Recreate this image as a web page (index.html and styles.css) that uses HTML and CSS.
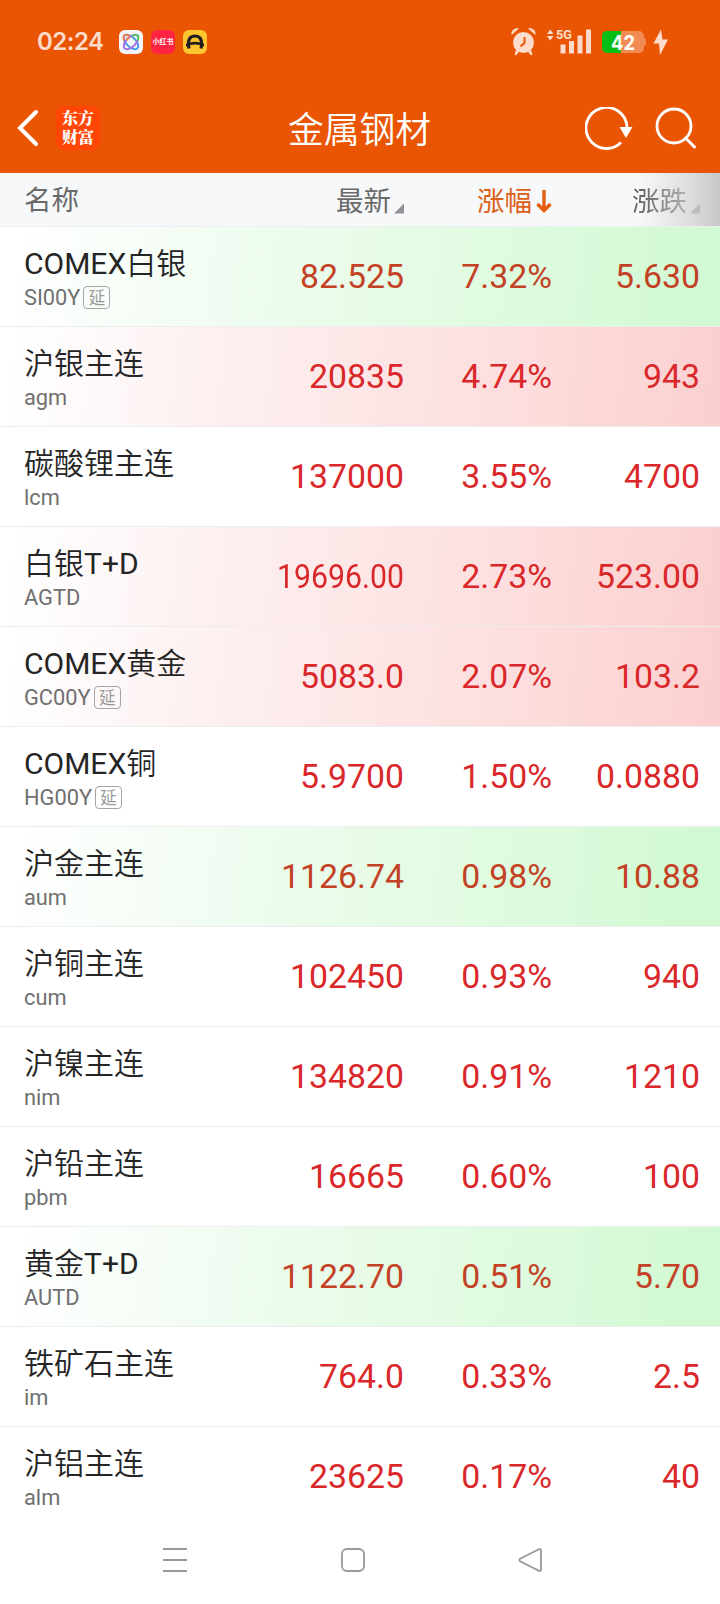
FILE: index.html
```html
<!DOCTYPE html>
<html lang="zh-CN">
<head>
<meta charset="utf-8">
<title>金属钢材</title>
<link rel="stylesheet" href="styles.css">
</head>
<body>
<div class="screen">
  <header class="top">
    <div class="status">
      <span class="clock">02:24</span>
      <svg class="app" viewBox="0 0 24 24"><rect width="24" height="24" rx="6" fill="#f4f6fa"/><g fill="none" stroke-width="2"><ellipse cx="12" cy="12" rx="9" ry="4.8" transform="rotate(45 12 12)" stroke="#3f9be8"/><ellipse cx="12" cy="12" rx="9" ry="4.8" transform="rotate(-45 12 12)" stroke="#a56be0"/><path d="M5.200 10.500C3.300 5 5.500 3.500 11 6.200" stroke="#f5794d"/><path d="M13 6.200C18.500 3.500 20.700 5 18.800 10.500" stroke="#55cf5b"/></g><path d="M7 7.500h4.500L8 11z" fill="#f58a4d"/></svg>
      <span class="app app-red">小红书</span>
      <svg class="app" viewBox="0 0 24 24"><rect width="24" height="24" rx="6" fill="#fdc52e"/><path d="M6 18.500C4.200 9.500 7 6 12 6S19.800 9.500 18 18.500" fill="none" stroke="#231f20" stroke-width="3.200"/><path d="M3 14Q12 9.500 21 14v2.500Q12 12.500 3 16.500z" fill="#231f20"/></svg>
      <span class="spacer"></span>
      <svg class="system" width="160" height="30" viewBox="0 0 160 30">
        <g fill="#fddccb">
          <circle cx="13.500" cy="16.500" r="10.500"/>
          <path d="M1.500 9C1 4 5 1.500 9 2.500zM18 2.500C22 1.500 26 4 25.500 9z"/>
          <path d="M6 24l3 1.500-2.500 3.500H4.500zM21 24l-3 1.500 2.500 3.500h2z"/>
          <path d="M37 8l3.200-4.500L43.500 8zM37 10h6.500l-3.300 4.500z"/>
          <rect x="50.500" y="18.500" width="5" height="9"/><rect x="59" y="15" width="5" height="12.500"/><rect x="67.500" y="9.500" width="5" height="18"/><rect x="76" y="3.500" width="5" height="24"/>
          <path d="M151 3.500L143.500 17.500H149L150 29 158 13.500H152.500z"/>
        </g>
        <path d="M14.500 11v6l-4 3.500" fill="none" stroke="#ea5504" stroke-width="2"/>
        <text x="46" y="13" class="net" textLength="16" lengthAdjust="spacingAndGlyphs">5G</text>
        <rect x="92" y="5" width="42" height="22" rx="5" fill="#f28b53"/><path d="M111 5H97a5 5 0 0 0-5 5v12a5 5 0 0 0 5 5h14z" fill="#05be14"/><path d="M134 12q2 0 2 2v4q0 2-2 2z" fill="#f28b53"/>
        <text x="101" y="23.500" class="battery" textLength="24" lengthAdjust="spacingAndGlyphs">42</text>
      </svg>
    </div>
    <div class="titlebar">
      <svg class="back" width="22" height="38" viewBox="0 0 22 38"><path d="M19 3L3 19l16 16" fill="none" stroke="#fff" stroke-width="4" stroke-linecap="round"/></svg>
      <div class="brand"><span>东方</span><span>财富</span></div>
      <h1>金属钢材</h1>
      <svg class="refresh" width="48" height="44" viewBox="0 0 48 44"><path d="M42 20A20.500 20.500 0 1 0 36 35.500" fill="none" stroke="#fff" stroke-width="2.800"/><path d="M34.500 20h13L41 31z" fill="#fff"/></svg>
      <svg class="search" width="42" height="44" viewBox="0 0 42 44"><circle cx="19" cy="20" r="17" fill="none" stroke="#fff" stroke-width="2.800"/><path d="M30.500 32l9 9" stroke="#fff" stroke-width="3" stroke-linecap="round"/></svg>
    </div>
  </header>
  <div class="columns">
    <span class="col-name">名称</span>
    <span class="col">最新<i class="corner"></i></span>
    <span class="col active">涨幅<svg width="16" height="26" viewBox="0 0 16 26"><path d="M8 1v20M1.500 15L8 21.500 14.500 15" fill="none" stroke="#e4600f" stroke-width="3.400"/></svg></span>
    <span class="col">涨跌<i class="corner"></i></span>
  </div>
  <main class="list">
    <div class="row up-green"><div class="name"><b><i>COMEX</i>白银</b><small>SI00Y<em>延</em></small></div><span>82.525</span><span>7.32%</span><span>5.630</span></div>
    <div class="row up-red"><div class="name"><b>沪银主连</b><small>agm</small></div><span>20835</span><span>4.74%</span><span>943</span></div>
    <div class="row"><div class="name"><b>碳酸锂主连</b><small>lcm</small></div><span>137000</span><span>3.55%</span><span>4700</span></div>
    <div class="row up-red"><div class="name"><b>白银<i>T+D</i></b><small>AGTD</small></div><span class="long">19696.00</span><span>2.73%</span><span>523.00</span></div>
    <div class="row up-red"><div class="name"><b><i>COMEX</i>黄金</b><small>GC00Y<em>延</em></small></div><span>5083.0</span><span>2.07%</span><span>103.2</span></div>
    <div class="row"><div class="name"><b><i>COMEX</i>铜</b><small>HG00Y<em>延</em></small></div><span>5.9700</span><span>1.50%</span><span>0.0880</span></div>
    <div class="row up-green"><div class="name"><b>沪金主连</b><small>aum</small></div><span>1126.74</span><span>0.98%</span><span>10.88</span></div>
    <div class="row"><div class="name"><b>沪铜主连</b><small>cum</small></div><span>102450</span><span>0.93%</span><span>940</span></div>
    <div class="row"><div class="name"><b>沪镍主连</b><small>nim</small></div><span>134820</span><span>0.91%</span><span>1210</span></div>
    <div class="row"><div class="name"><b>沪铅主连</b><small>pbm</small></div><span>16665</span><span>0.60%</span><span>100</span></div>
    <div class="row up-green"><div class="name"><b>黄金<i>T+D</i></b><small>AUTD</small></div><span>1122.70</span><span>0.51%</span><span>5.70</span></div>
    <div class="row"><div class="name"><b>铁矿石主连</b><small>im</small></div><span>764.0</span><span>0.33%</span><span>2.5</span></div>
    <div class="row"><div class="name"><b>沪铝主连</b><small>alm</small></div><span>23625</span><span>0.17%</span><span>40</span></div>
  </main>
  <nav class="nav">
    <svg viewBox="0 0 26 26"><path d="M1 2h24M1 13h24M1 24h24"/></svg>
    <svg viewBox="0 0 26 26"><rect x="2" y="2" width="22" height="22" rx="5"/></svg>
    <svg viewBox="0 0 26 26"><path d="M22 2.200L3.500 11.500Q1 13 3.500 14.500L22 23.800Q24 24.500 24 22.500V3.500Q24 1.500 22 2.200z"/></svg>
  </nav>
</div>
</body>
</html>
```
FILE: styles.css
```css
* { box-sizing: border-box; }
body { margin: 0; background: #fff; font-family: Roboto, "Noto Sans CJK SC", sans-serif; }
.screen { width: 720px; height: 1604px; display: flex; flex-direction: column; overflow: hidden; }
.top { height: 173px; background: #ea5504; flex: none; }
.status { height: 84px; padding: 0 50px 0 37px; display: flex; align-items: center; }
.clock { width: 82px; font: 600 24px/30px Inter, sans-serif; letter-spacing: -.5px; color: #fddccb; white-space: nowrap; margin-top: -1px; }
.app { width: 24px; height: 24px; margin-right: 8px; flex: none; }
.app-red { border-radius: 6px; background: #ff2442; color: #fff; font: 700 7px/23px "Noto Sans CJK SC", sans-serif; text-align: center; white-space: nowrap; }
.spacer { flex: 1; }
.system { margin-top: -3px; }
.net { font: 700 13px Roboto, sans-serif; fill: #fddccb; }
.battery { font: 700 20px Inter, sans-serif; fill: #fff; }
.titlebar { height: 87px; padding: 0 23px 0 17px; display: flex; align-items: center; }
.brand { width: 44px; height: 44px; margin-left: 17px; padding-bottom: 2px; border-radius: 8px; background: #ff4604; color: #fff; display: flex; flex-direction: column; align-items: center; justify-content: center; font: 900 16px/19px "Noto Serif CJK SC", "Noto Sans CJK SC", sans-serif; }
.brand span { height: 19px; }
.titlebar h1 { margin: 0; flex: 1; padding: 6px 0 0 35px; text-align: center; font-weight: 350; font-size: 35.800px; line-height: 48px; color: #fff; }
.refresh { margin: 2px 0 0 1px; }
.search { margin-left: 22px; }
.columns { height: 54px; flex: none; padding: 0 20px 0 24px; display: grid; grid-template-columns: 220px 160px 148px 148px; align-items: center; color: #6a6a6a; font-size: 27.500px; line-height: 40px; border-bottom: 1px solid #edf0f1; background: linear-gradient(90deg, rgba(198,198,198,0) 640px, rgba(198,198,198,.55) 690px, #c8c8c8 720px), #f7f8fa; }
.col-name { padding-top: 2px; }
.col { display: flex; justify-content: flex-end; align-items: center; padding-top: 5px; }
.col:last-child { color: transparent; background: linear-gradient(90deg, #666 90px, #aaa 130px); -webkit-background-clip: text; background-clip: text; }
.corner { width: 10px; height: 10px; margin: 13px 0 0 3px; background: #919196; clip-path: polygon(100% 0, 100% 100%, 0 100%); }
.col:last-child .corner { background: #bcbcbc; }
.active { color: #dc5f17; }
.active svg { margin: 0 0 0 4px; }
.list { height: 1292px; flex: none; overflow: hidden; }
.row { height: 100px; border-bottom: 1px solid #ebedef; padding: 0 20px 0 24px; display: grid; grid-template-columns: 220px 160px 148px 148px; align-items: center; color: #da272a; }
.row > span { text-align: right; font-size: 33.800px; line-height: 44px; }
.row > .long { transform: scaleX(.895); transform-origin: right; white-space: nowrap; }
.up-green { background: linear-gradient(97deg, #fff 2%, #effcf0 34%, #e0fbe0 68%, #d1f9d2 98%); color: #c34124; }
.up-red { background: linear-gradient(97deg, #fff 2%, #fdeeee 34%, #fddfdf 68%, #fbd1d0 98%); }
.name { display: flex; flex-direction: column; white-space: nowrap; color: #252525; padding-top: 2px; }
.name b { font-weight: 350; font-size: 30px; line-height: 40px; }
.name i { font-style: normal; font-weight: 400; }
.name small { display: flex; align-items: center; font-size: 21.800px; line-height: 28px; color: #707070; }
.name em { width: 27px; height: 23px; margin: 0 0 0 3px; border: 1px solid #a5a5a5; border-radius: 4px; font: normal 16.500px/20px "Noto Sans CJK SC", sans-serif; text-align: center; color: #989898; }
.nav { flex: 1; display: flex; justify-content: space-between; align-items: center; padding: 0 177px 4px 162px; }
.nav svg { width: 26px; height: 26px; fill: none; stroke: #999; stroke-width: 1.800; }
```
